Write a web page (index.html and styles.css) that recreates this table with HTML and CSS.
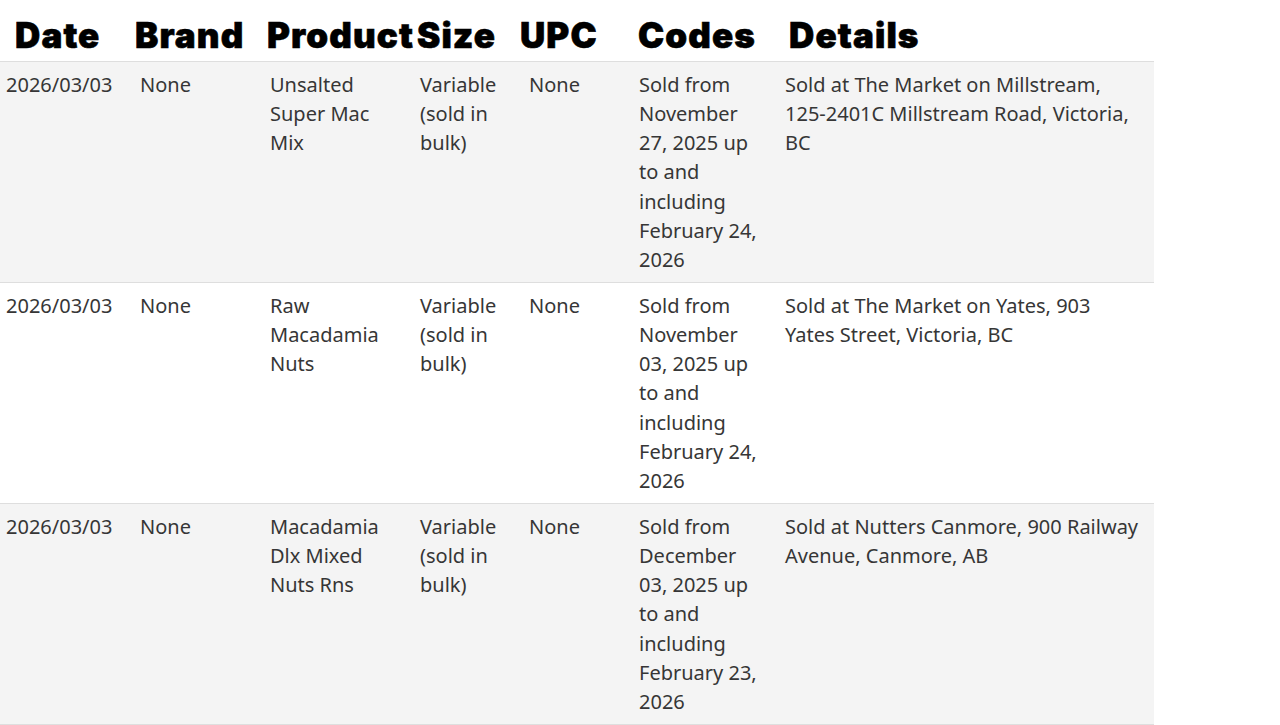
FILE: index.html
```html
<!DOCTYPE html>
<html lang="en">
<head>
<meta charset="utf-8">
<title>Recalls</title>
<link rel="stylesheet" href="styles.css">
</head>
<body>
<div class="recalls">
  <div class="row head">
    <div class="th th-date">Date</div>
    <div class="th th-brand">Brand</div>
    <div class="th th-product">Product</div>
    <div class="th th-size">Size</div>
    <div class="th th-upc">UPC</div>
    <div class="th th-codes">Codes</div>
    <div class="th th-details">Details</div>
  </div>
  <div class="row shaded">
    <div class="td c-date">2026/03/03</div>
    <div class="td c-brand">None</div>
    <div class="td c-product">Unsalted Super Mac Mix</div>
    <div class="td c-size">Variable (sold in bulk)</div>
    <div class="td c-upc">None</div>
    <div class="td c-codes">Sold from November 27, 2025 up to and including February 24, 2026</div>
    <div class="td c-details">Sold at The Market on Millstream, 125-2401C Millstream Road, Victoria, BC</div>
  </div>
  <div class="row">
    <div class="td c-date">2026/03/03</div>
    <div class="td c-brand">None</div>
    <div class="td c-product">Raw Macadamia Nuts</div>
    <div class="td c-size">Variable (sold in bulk)</div>
    <div class="td c-upc">None</div>
    <div class="td c-codes">Sold from November 03, 2025 up to and including February 24, 2026</div>
    <div class="td c-details">Sold at The Market on Yates, 903 Yates Street, Victoria, BC</div>
  </div>
  <div class="row shaded">
    <div class="td c-date">2026/03/03</div>
    <div class="td c-brand">None</div>
    <div class="td c-product">Macadamia Dlx Mixed Nuts Rns</div>
    <div class="td c-size">Variable (sold in bulk)</div>
    <div class="td c-upc">None</div>
    <div class="td c-codes">Sold from December 03, 2025 up to and including February 23, 2026</div>
    <div class="td c-details">Sold at Nutters Canmore, 900 Railway Avenue, Canmore, AB</div>
  </div>
</div>
</body>
</html>
```
FILE: styles.css
```css
html, body {
  margin: 0;
  padding: 0;
  background: #ffffff;
}

.recalls {
  width: 1154px;
  font-family: "Noto Sans", "Open Sans", sans-serif;
  font-size: 20px;
  line-height: 29.25px;
  color: #363636;
}

.row {
  display: grid;
  grid-template-columns: 134px 130px 150px 109px 110px 146px 375px;
  border-bottom: 1px solid #dedede;
}

.row.shaded {
  background: #f4f4f4;
}

.row.head {
  height: 61px;
  align-items: end;
}

.th {
  font-family: "Inter", "Roboto", sans-serif;
  font-weight: 900;
  font-size: 35px;
  line-height: 40px;
  letter-spacing: 1.1px;
  -webkit-text-stroke: 0.6px #000000;
  color: #000000;
  white-space: nowrap;
  padding-bottom: 6px;
}

.th-date { padding-left: 15px; }
.th-brand { padding-left: 1px; }
.th-product { padding-left: 3px; }
.th-size { padding-left: 3px; }
.th-upc { margin-left: -3px; }
.th-codes { padding-left: 5px; }
.th-details { padding-left: 10px; }

.td {
  padding: 7.5px 12px 7.75px 6px;
}

.c-product { padding-right: 20px; }
.c-size { padding-right: 10px; }
.c-codes { padding-right: 16px; }
.c-details { padding-right: 9px; }
```
